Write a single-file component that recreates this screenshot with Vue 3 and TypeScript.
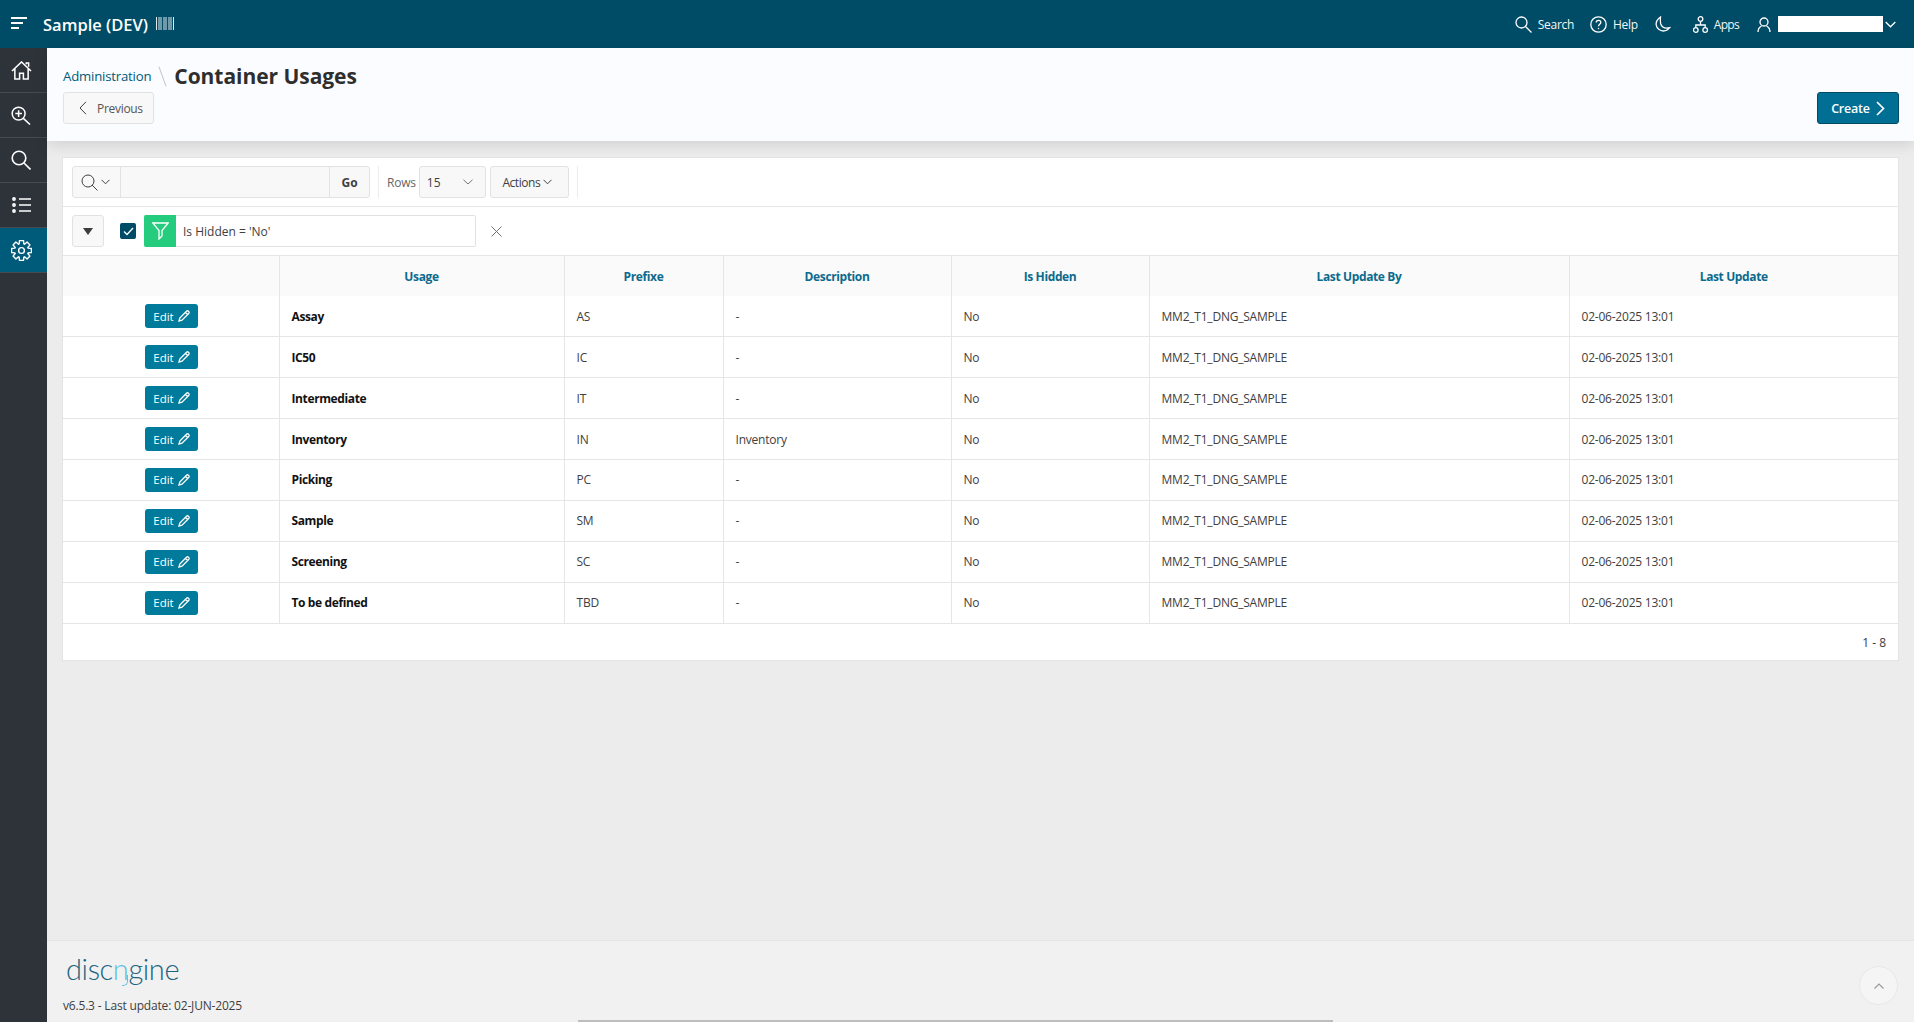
<script setup lang="ts">
const navItems = ['home', 'zoom', 'search', 'list', 'gear']

const columns = [
  { label: '', width: 216 },
  { label: 'Usage', width: 285 },
  { label: 'Prefixe', width: 159 },
  { label: 'Description', width: 228 },
  { label: 'Is Hidden', width: 198 },
  { label: 'Last Update By', width: 420 },
  { label: 'Last Update', width: 329 },
]

const rows = [
  { usage: 'Assay', prefix: 'AS', description: '-' },
  { usage: 'IC50', prefix: 'IC', description: '-' },
  { usage: 'Intermediate', prefix: 'IT', description: '-' },
  { usage: 'Inventory', prefix: 'IN', description: 'Inventory' },
  { usage: 'Picking', prefix: 'PC', description: '-' },
  { usage: 'Sample', prefix: 'SM', description: '-' },
  { usage: 'Screening', prefix: 'SC', description: '-' },
  { usage: 'To be defined', prefix: 'TBD', description: '-' },
]

// eight square teeth round the cog outline
const gearPath = (() => {
  const pts: string[] = []
  for (let i = 0; i < 8; i++) {
    const a = (i * Math.PI) / 4
    const steps: [number, number][] = [
      [8, -0.34],
      [11.6, -0.2],
      [11.6, 0.2],
      [8, 0.34],
    ]
    for (const [r, d] of steps) {
      pts.push(`${(12 + r * Math.cos(a + d)).toFixed(2)} ${(12 + r * Math.sin(a + d)).toFixed(2)}`)
    }
  }
  return `M${pts.join('L')}Z`
})()
</script>

<template>
  <div class="page">
    <header class="topbar">
      <button class="burger" aria-label="Menu">
        <svg width="16" height="12" viewBox="0 0 16 12"><path d="M0 1h16M0 6h12M0 11h8" stroke="#fff" stroke-width="2" /></svg>
      </button>
      <div class="brand">
        <span>Sample (DEV)</span>
        <svg class="barcode" width="18" height="13" viewBox="0 0 18 13">
          <path d="M.5 0v13M3 0v13M5 0v13M8 0v13M10 0v13M13 0v13M15 0v13M17.500 0v13" stroke="#dfe8ec" stroke-width="1" />
        </svg>
      </div>
      <nav class="top-links">
        <a class="top-link link-search">
          <svg width="17" height="17" viewBox="0 0 17 17" class="line"><circle cx="6.5" cy="6.5" r="5.5" /><path d="M10.5 10.5l6 6" /></svg>
          <span>Search</span>
        </a>
        <a class="top-link link-help">
          <svg width="17" height="17" viewBox="0 0 17 17" class="line">
            <circle cx="8.5" cy="8.5" r="7.7" />
            <path d="M6.2 6.6c0-3 4.6-3 4.6-.2 0 1.8-2.3 1.8-2.3 3.8" />
            <path d="M8.5 11.8v1.4" />
          </svg>
          <span>Help</span>
        </a>
        <a class="top-link link-moon">
          <svg width="16" height="16" viewBox="0 0 16 16" class="line"><path d="M5.5 1C2.500 3 .8 6 1.200 9c.6 3.600 3.800 6 7 6 2.800 0 5-1.300 6.500-3.300-4.500 1-8-.7-9-4C5.200 5.500 5.300 3 5.500 1z" /></svg>
        </a>
        <a class="top-link link-apps">
          <svg width="15" height="17" viewBox="0 0 15 17" class="line">
            <circle cx="7.500" cy="3" r="2.300" /><circle cx="2.800" cy="14" r="2.300" /><circle cx="12.200" cy="14" r="2.300" />
            <path d="M7.500 5.300v3.700M2.800 11.700V9h9.400v2.700" />
          </svg>
          <span>Apps</span>
        </a>
        <a class="top-link link-user">
          <svg width="14" height="15" viewBox="0 0 14 15" class="line"><circle cx="7" cy="5" r="4" /><path d="M1 15c0-3 1.500-5 3.500-6M13 15c0-3-1.500-5-3.500-6" /></svg>
          <span class="user-block"></span>
          <svg width="11" height="7" viewBox="0 0 11 7" class="line"><path d="M.7 1l4.800 4.800L10.300 1" /></svg>
        </a>
      </nav>
    </header>

    <div class="shell">
      <aside class="sidenav">
        <a v-for="item in navItems" :key="item" class="nav-item" :class="{ 'nav-active': item === 'gear' }">
          <svg v-if="item === 'home'" width="21" height="19" viewBox="0 0 22 20" class="line thick">
            <path d="M1 10.500L11 1l10 9.500M4 8v11h5v-6h4v6h5V8M16 3.500V2h2.500v4" />
          </svg>
          <svg v-else-if="item === 'zoom'" width="20" height="19" viewBox="0 0 21 20" class="line thick">
            <circle cx="8" cy="8" r="6.800" /><path d="M8 4.500v7M4.500 8h7M13 13l7 6.500" />
          </svg>
          <svg v-else-if="item === 'search'" width="20" height="20" viewBox="0 0 20 20" class="line thick">
            <circle cx="8" cy="8" r="6.800" /><path d="M13 13l6.500 6.500" />
          </svg>
          <svg v-else-if="item === 'list'" width="19" height="16" viewBox="0 0 19 16" class="line thick">
            <path d="M7 2h12M7 8h12M7 14h12" />
            <circle cx="2" cy="2" r="1.100" /><circle cx="2" cy="8" r="1.100" /><circle cx="2" cy="14" r="1.100" />
          </svg>
          <svg v-else width="21" height="21" viewBox="0 0 24 24" class="line thick gear">
            <circle cx="12" cy="12" r="3.300" />
            <path :d="gearPath" />
          </svg>
        </a>
      </aside>

      <div class="main">
        <section class="title-bar">
          <div class="title-left">
            <div class="crumbs">
              <a class="crumb-link">Administration</a>
              <span class="crumb-sep"></span>
              <h1>Container Usages</h1>
            </div>
            <button class="btn btn-prev">
              <svg width="8" height="14" viewBox="0 0 8 14" class="line dark"><path d="M7 .8L1 7l6 6.200" /></svg>
              <span>Previous</span>
            </button>
          </div>
          <button class="btn btn-create">
            <span>Create</span>
            <svg width="9" height="15" viewBox="0 0 9 15" class="line stout"><path d="M1 1l6.500 6.500L1 14" /></svg>
          </button>
        </section>

        <main class="content">
          <section class="report">
            <div class="toolbar">
              <div class="search-group">
                <div class="search-type">
                  <svg width="17" height="17" viewBox="0 0 17 17" class="line dark"><circle cx="7" cy="7" r="6" /><path d="M11 11l5.500 5.500" /></svg>
                  <svg width="9" height="6" viewBox="0 0 9 6" class="line dark"><path d="M.5.800L4.500 4.800 8.500.8" /></svg>
                </div>
                <div class="search-input"></div>
                <div class="search-go">Go</div>
              </div>
              <span class="tool-sep"></span>
              <span class="rows-label">Rows</span>
              <div class="rows-select">
                <span>15</span>
                <svg width="10" height="6" viewBox="0 0 10 6" class="line muted"><path d="M.5.800L5 5l4.500-4.200" /></svg>
              </div>
              <div class="actions-btn">
                <span>Actions</span>
                <svg width="9" height="6" viewBox="0 0 9 6" class="line dark"><path d="M.5.800L4.500 4.800 8.500.8" /></svg>
              </div>
              <span class="tool-sep sep-after"></span>
            </div>

            <div class="filters">
              <button class="toggle" aria-label="Toggle filters">
                <svg width="10" height="7" viewBox="0 0 10 7"><path d="M0 0h10L5 7z" fill="#3c3c3c" /></svg>
              </button>
              <span class="check">
                <svg width="11" height="9" viewBox="0 0 11 9" class="line"><path d="M1 4.500l3 3L10 1" /></svg>
              </span>
              <div class="filter-chip">
                <span class="filter-icon">
                  <svg width="17" height="18" viewBox="0 0 17 18" class="line"><path d="M.8 1h15.400L10 8.500V14l-3 3V8.500z" /></svg>
                </span>
                <span class="filter-text">Is Hidden = 'No'</span>
              </div>
              <svg class="filter-remove" width="11" height="11" viewBox="0 0 11 11"><path d="M.5.500l10 10M10.500.500l-10 10" stroke="#707070" stroke-width="1" /></svg>
            </div>

            <table class="grid">
              <colgroup>
                <col v-for="(c, i) in columns" :key="i" :style="{ width: c.width + 'px' }" />
              </colgroup>
              <thead>
                <tr>
                  <th v-for="(c, i) in columns" :key="i">{{ c.label }}</th>
                </tr>
              </thead>
              <tbody>
                <tr v-for="r in rows" :key="r.usage">
                  <td class="cell-edit">
                    <button class="btn-edit">
                      <span>Edit</span>
                      <svg width="12" height="12" viewBox="0 0 12 12" class="line">
                        <path d="M1 11l.8-3L8.500 1.300c.6-.6 1.400-.6 1.900-.1l.4.4c.5.5.5 1.300-.1 1.900L4 10.200zM7.500 2.500l2 2" />
                      </svg>
                    </button>
                  </td>
                  <td class="cell-usage">{{ r.usage }}</td>
                  <td>{{ r.prefix }}</td>
                  <td>{{ r.description }}</td>
                  <td>No</td>
                  <td>MM2_T1_DNG_SAMPLE</td>
                  <td>02-06-2025 13:01</td>
                </tr>
              </tbody>
            </table>
            <div class="pager">1 - 8</div>
          </section>
        </main>

        <footer class="footer">
          <div class="logo">disc<span class="logo-n">n</span>gine</div>
          <div class="version">v6.5.3 - Last update: 02-JUN-2025</div>
          <button class="to-top" aria-label="Back to top">
            <svg width="10" height="6" viewBox="0 0 10 6"><path d="M.5 5.500L5 1l4.500 4.500" fill="none" stroke="#9a9a9a" stroke-width="1.200" /></svg>
          </button>
          <span class="scrollbar"></span>
        </footer>
      </div>
    </div>
  </div>
</template>

<style scoped>
.page {
  height: 100vh;
  display: flex;
  flex-direction: column;
  font-family: "Open Sans", "Noto Sans", sans-serif;
  font-size: 12px;
  color: #404040;
  overflow: hidden;
}
button {
  font-family: inherit;
  padding: 0;
  cursor: pointer;
}
.line {
  fill: none;
  stroke: #fff;
  stroke-width: 1.3;
  display: block;
}
.line.thick {
  stroke-width: 1.6;
}
.line.stout {
  stroke-width: 1.7;
}
.line.dark {
  stroke: #404040;
  stroke-width: 1;
}
.line.muted {
  stroke: #777;
  stroke-width: 1;
}
.gear {
  stroke-linejoin: round;
}

.topbar {
  height: 48px;
  flex: none;
  background: #004c66;
  color: #fff;
  display: flex;
  align-items: center;
}
.burger {
  width: 43px;
  padding-left: 11px;
  background: none;
  border: 0;
  text-align: left;
}
.brand {
  display: flex;
  align-items: center;
  gap: 8px;
  font-size: 16.5px;
  font-weight: 600;
}
.barcode {
  margin-top: -2px;
}
.top-links {
  margin-left: auto;
  display: flex;
  align-items: center;
  padding-right: 18px;
}
.top-link {
  display: flex;
  align-items: center;
  gap: 6px;
  font-size: 12px;
  letter-spacing: -0.3px;
  color: #f2f6f8;
}
.link-help {
  margin-left: 16px;
}
.link-moon {
  margin-left: 17px;
}
.link-apps {
  margin-left: 22px;
  letter-spacing: -0.7px;
}
.link-user {
  margin-left: 18px;
}
.user-block {
  width: 105px;
  height: 16px;
  background: #fff;
  margin-left: 1px;
  margin-right: -4px;
}

.shell {
  flex: 1;
  display: flex;
  min-height: 0;
}
.sidenav {
  width: 47px;
  flex: none;
  background: #2e333a;
}
.nav-item {
  height: 45px;
  padding-right: 5px;
  display: flex;
  align-items: center;
  justify-content: center;
  box-sizing: border-box;
  border-bottom: 1px solid #474b51;
}
.nav-active {
  background: #005a7a;
}

.main {
  flex: 1;
  min-width: 0;
  display: flex;
  flex-direction: column;
  background: #ececec;
}
.title-bar {
  height: 93px;
  flex: none;
  box-sizing: border-box;
  background: #fbfcff;
  padding: 12px 15px 0 16px;
  display: flex;
  justify-content: space-between;
  align-items: flex-start;
  box-shadow: 0 3px 14px rgba(0, 0, 0, 0.13);
  position: relative;
}
.crumbs {
  height: 32px;
  display: flex;
  align-items: center;
}
.crumb-link {
  font-size: 13.2px;
  letter-spacing: -0.2px;
  color: #005a7a;
}
.crumb-sep {
  width: 1px;
  height: 21px;
  margin: 0 11px;
  background: #c4c4c4;
  transform: rotate(-20deg);
}
h1 {
  margin: 0;
  font-size: 21px;
  font-weight: 700;
  letter-spacing: -0.05px;
  color: #2e2e2e;
}
.btn {
  height: 32px;
  box-sizing: border-box;
  border-radius: 3px;
  display: flex;
  align-items: center;
}
.btn-prev {
  width: 91px;
  padding-left: 15px;
  gap: 10px;
  background: #f8f8f8;
  border: 1px solid #e2e2e2;
  color: #555;
  font-size: 12px;
  letter-spacing: -0.3px;
}
.btn-create {
  width: 82px;
  margin-top: 32px;
  justify-content: center;
  gap: 6px;
  background: #016f94;
  border: 1px solid #004c66;
  color: #fff;
  font-size: 12.5px;
  font-weight: 600;
  letter-spacing: -0.2px;
}

.content {
  flex: 1;
  min-height: 0;
  padding: 17px 16px 0;
}
.report {
  background: #fff;
  box-shadow: 0 0 0 1px #e4e4e4;
}
.toolbar {
  height: 49px;
  box-sizing: border-box;
  padding: 8px 9px;
  display: flex;
  align-items: center;
  border-bottom: 1px solid #e6e6e6;
}
.search-group {
  width: 298px;
  height: 32px;
  box-sizing: border-box;
  display: flex;
  background: #f8f8f8;
  border: 1px solid #e2e2e2;
  border-radius: 3px;
}
.search-type {
  width: 48px;
  box-sizing: border-box;
  padding-right: 3px;
  display: flex;
  align-items: center;
  justify-content: center;
  gap: 3px;
  border-right: 1px solid #e2e2e2;
}
.search-input {
  flex: 1;
}
.search-go {
  width: 39px;
  display: flex;
  align-items: center;
  justify-content: center;
  border-left: 1px solid #e2e2e2;
  font-size: 12px;
  font-weight: 700;
}
.tool-sep {
  width: 1px;
  height: 32px;
  background: #ececec;
  margin: 0 8px;
}
.rows-label {
  color: #666;
  letter-spacing: -0.2px;
  margin-right: 3px;
}
.rows-select {
  width: 67px;
  height: 32px;
  box-sizing: border-box;
  display: flex;
  align-items: center;
  justify-content: space-between;
  padding: 0 12px 0 7px;
  background: #f8f8f8;
  border: 1px solid #e2e2e2;
  border-radius: 3px;
}
.actions-btn {
  width: 79px;
  height: 32px;
  box-sizing: border-box;
  margin-left: 4px;
  padding-right: 4px;
  display: flex;
  align-items: center;
  justify-content: center;
  gap: 3px;
  background: #f8f8f8;
  border: 1px solid #e2e2e2;
  border-radius: 3px;
  letter-spacing: -0.45px;
}
.sep-after {
  margin-left: 8px;
}

.filters {
  height: 49px;
  box-sizing: border-box;
  padding: 0 9px;
  display: flex;
  align-items: center;
  border-bottom: 1px solid #e6e6e6;
}
.toggle {
  width: 32px;
  height: 32px;
  display: flex;
  align-items: center;
  justify-content: center;
  background: #f8f8f8;
  border: 1px solid #e2e2e2;
  border-radius: 3px;
}
.check {
  width: 16px;
  height: 16px;
  margin-left: 16px;
  display: flex;
  align-items: center;
  justify-content: center;
  background: #004c66;
  border-radius: 2px;
}
.filter-chip {
  width: 332px;
  height: 32px;
  box-sizing: border-box;
  margin-left: 8px;
  display: flex;
  align-items: center;
  border: 1px solid #e2e2e2;
  border-left: 0;
  border-radius: 2px;
}
.filter-icon {
  width: 32px;
  height: 32px;
  display: flex;
  align-items: center;
  justify-content: center;
  background: #26cc7e;
  border-radius: 2px 0 0 2px;
}
.filter-text {
  margin-left: 7px;
  font-size: 12px;
}
.filter-remove {
  margin-left: 15px;
}

.grid {
  width: 100%;
  table-layout: fixed;
  border-collapse: collapse;
}
th {
  height: 40px;
  padding: 0;
  background: #fafafa;
  border-left: 1px solid #e6e6e6;
  font-size: 12px;
  font-weight: 700;
  letter-spacing: -0.38px;
  color: #0b6a8d;
}
th:first-child,
td:first-child {
  border-left: 0;
}
td {
  height: 40.875px;
  box-sizing: border-box;
  padding: 0 12px;
  border-left: 1px solid #e6e6e6;
  border-bottom: 1px solid #e6e6e6;
  font-size: 12px;
  letter-spacing: -0.22px;
  color: #404040;
}
.cell-edit {
  padding: 0;
}
.btn-edit {
  width: 53px;
  height: 24px;
  margin-left: 82px;
  display: flex;
  align-items: center;
  justify-content: center;
  gap: 4px;
  background: #017b9c;
  border: 0;
  border-radius: 3px;
  color: #fff;
  font-size: 11.5px;
}
.cell-usage {
  font-weight: 700;
  letter-spacing: -0.38px;
  color: #111;
}
.pager {
  height: 36px;
  box-sizing: border-box;
  padding: 1px 12px 0 0;
  display: flex;
  align-items: center;
  justify-content: flex-end;
}

.footer {
  height: 82px;
  flex: none;
  box-sizing: border-box;
  background: #f1f1f1;
  border-top: 1px solid #e4e4e4;
  padding: 10px 16px 0;
  position: relative;
}
.logo {
  margin-left: 3px;
  height: 40px;
  font-family: Lato, "Open Sans", sans-serif;
  font-size: 29px;
  font-weight: 300;
  line-height: 36px;
  letter-spacing: -0.4px;
  color: #1d6480;
}
.logo-n {
  position: relative;
  color: #62c0e6;
}
.logo-n::after {
  content: "";
  position: absolute;
  right: 0;
  top: 24px;
  width: 5px;
  height: 10px;
  border-right: 1.4px solid #62c0e6;
  border-bottom: 1.4px solid #62c0e6;
  border-bottom-right-radius: 5px;
}
.version {
  margin-top: 6px;
  font-size: 12px;
  letter-spacing: -0.18px;
}
.to-top {
  position: absolute;
  left: 1812px;
  top: 25px;
  width: 39px;
  height: 39px;
  background: #f5f5f5;
  border: 1px solid #e8e8e8;
  border-radius: 50%;
  display: flex;
  align-items: center;
  justify-content: center;
}
.scrollbar {
  position: absolute;
  left: 531px;
  bottom: 0;
  width: 755px;
  height: 2px;
  background: #bdbdbd;
}
</style>

<style>
html,
body {
  margin: 0;
  overflow: hidden;
}
</style>
